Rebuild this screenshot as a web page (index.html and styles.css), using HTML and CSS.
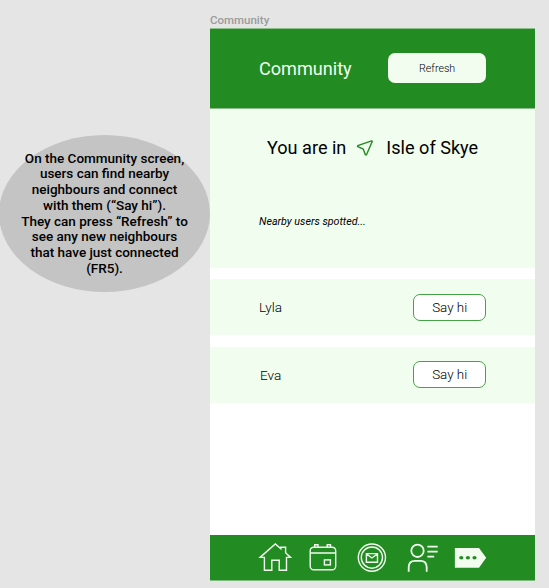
FILE: index.html
```html
<!DOCTYPE html>
<html lang="en">
<head>
<meta charset="utf-8">
<title>Community</title>
<link rel="stylesheet" href="styles.css">
</head>
<body>
<div class="board">
  <aside class="note">
    <p>On the Community screen,<br>users can find nearby<br>neighbours and connect<br>with them (“Say hi”).<br>They can press “Refresh” to<br>see any new neighbours<br>that have just connected<br>(FR5).</p>
  </aside>
  <section class="frame">
    <div class="frame-label">Community</div>
    <main class="screen">
      <header class="header">
        <h1>Community</h1>
        <button class="refresh">Refresh</button>
      </header>
      <section class="location">
        <div class="place">
          <span class="you">You are in</span>
          <svg class="arrow" width="18" height="18" viewBox="0 0 18 18"><path d="M15.6 1.9 1.8 6.7Q1.2 7.2 1.8 7.7L7.2 10 9.3 15.6Q10 16.3 10.6 15.5L16.2 2.5Q16.3 1.8 15.6 1.9Z"/></svg>
          <span>Isle of Skye</span>
        </div>
        <p class="spotted">Nearby users spotted...</p>
      </section>
      <div class="user"><span class="name">Lyla</span><button class="hi">Say hi</button></div>
      <div class="user"><span class="name eva">Eva</span><button class="hi">Say hi</button></div>
      <nav class="nav">
        <svg width="326" height="45" viewBox="210 535 326 45">
          <path d="M260.1 557.4 275.3 544 280.8 548.8V547.2H285.6V552.8L290.5 557.4H286.5V570.2H279.2V560.3H271.8V570.2H264.4V557.4Z"/>
          <rect x="310.2" y="547.2" width="25.5" height="22.6" rx="3.5"/>
          <path d="M310.2 553H335.7M314.7 547V544.8H318V547M327.2 547V544.8H330.5V547"/>
          <rect x="324.4" y="559.9" width="6" height="5"/>
          <circle cx="371.9" cy="557.6" r="13.6"/>
          <circle cx="371.9" cy="557.6" r="10.6"/>
          <path d="M366.4 553.6H377.5V562.3H366.4ZM366.6 554 371.9 558 377.3 554"/>
          <g class="bold"><circle cx="417.5" cy="550.8" r="6.2"/>
          <path d="M408.7 571.8V567.3Q408.7 560.8 415 560.8H420.4Q426.7 560.8 426.7 567.3V571.8M427.4 546.7H437.7M427.4 551.7H437.7M427.4 556.7H434.2"/></g>
          <path class="tag" d="M454.9 548H479L486.2 557.8 479 567.8H454.9Z"/>
          <g class="dots"><ellipse cx="461.3" cy="557.8" rx="2.1" ry="1.8"/><ellipse cx="467.9" cy="557.8" rx="2.1" ry="1.8"/><ellipse cx="474.5" cy="557.8" rx="2.1" ry="1.8"/></g>
        </svg>
      </nav>
    </main>
  </section>
</div>
</body>
</html>
```
FILE: styles.css
```css
* { box-sizing: border-box; }
body { margin: 0; background: #e5e5e5; font-family: Roboto, sans-serif; color: #000; overflow: hidden; }
h1, p { margin: 0; font-weight: 400; }
button { font-family: inherit; color: #000; padding: 0; font-weight: 300; }
.board { display: flex; width: 549px; height: 588px; }
.note { flex: none; width: 211px; height: 157px; margin: 135px 0 0 -1px; border-radius: 50%; background: #c4c4c4; display: flex; justify-content: center; }
.note p { padding-top: 15.5px; font-size: 13.5px; line-height: 15.8px; font-weight: 500; text-align: center; white-space: nowrap; }
.frame { width: 325.4px; padding-top: 13px; }
.frame-label { height: 15px; font-size: 11.5px; line-height: 15px; font-weight: 500; color: #9b9b9b; }
.screen { display: flex; flex-direction: column; height: 553px; background: #fff; }
.header { display: flex; justify-content: space-between; align-items: center; height: 81px; padding: 0 49px; background: #228b22; border: solid #8abf8a; border-width: 1px 0; }
h1 { color: #f2fdf0; font-size: 18.1px; }
.refresh { width: 98.5px; height: 30px; margin-bottom: 1px; border: 0; border-radius: 7px; background: #f2fdf0; font-size: 10.7px; }
.location { height: 159px; margin-bottom: 11px; background: #f1fdef; padding: 27px 0 0 49px; }
.place { display: flex; align-items: center; height: 22px; padding-left: 8px; font-size: 18.1px; }
.arrow { margin: 2px 12.5px 0 9.5px; fill: none; stroke: #228b22; stroke-width: 1.4; }
.spotted { margin-top: 56px; font-size: 10.7px; line-height: 16px; font-style: italic; }
.user { display: flex; justify-content: space-between; align-items: center; height: 56px; padding: 0 49px; margin-bottom: 12px; background: #f1fdef; }
.name { font-size: 13.6px; font-weight: 300; }
.eva { padding: 0 0 1px 1px; }
.hi { width: 73.5px; height: 27px; border: 1px solid #45a245; border-radius: 7px; background: #fff; font-size: 13.4px; }
.eva + .hi { margin-bottom: 1px; }
.nav { margin-top: auto; height: 46px; background: #228b22; border-bottom: 1px solid #7fba7f; }
.nav svg { display: block; fill: none; stroke: #f2fdf0; stroke-width: 1.4; }
.nav .bold { stroke-width: 1.8; }
.nav .tag { fill: #f2fdf0; stroke: none; }
.nav .dots { fill: #228b22; stroke: none; }
```
